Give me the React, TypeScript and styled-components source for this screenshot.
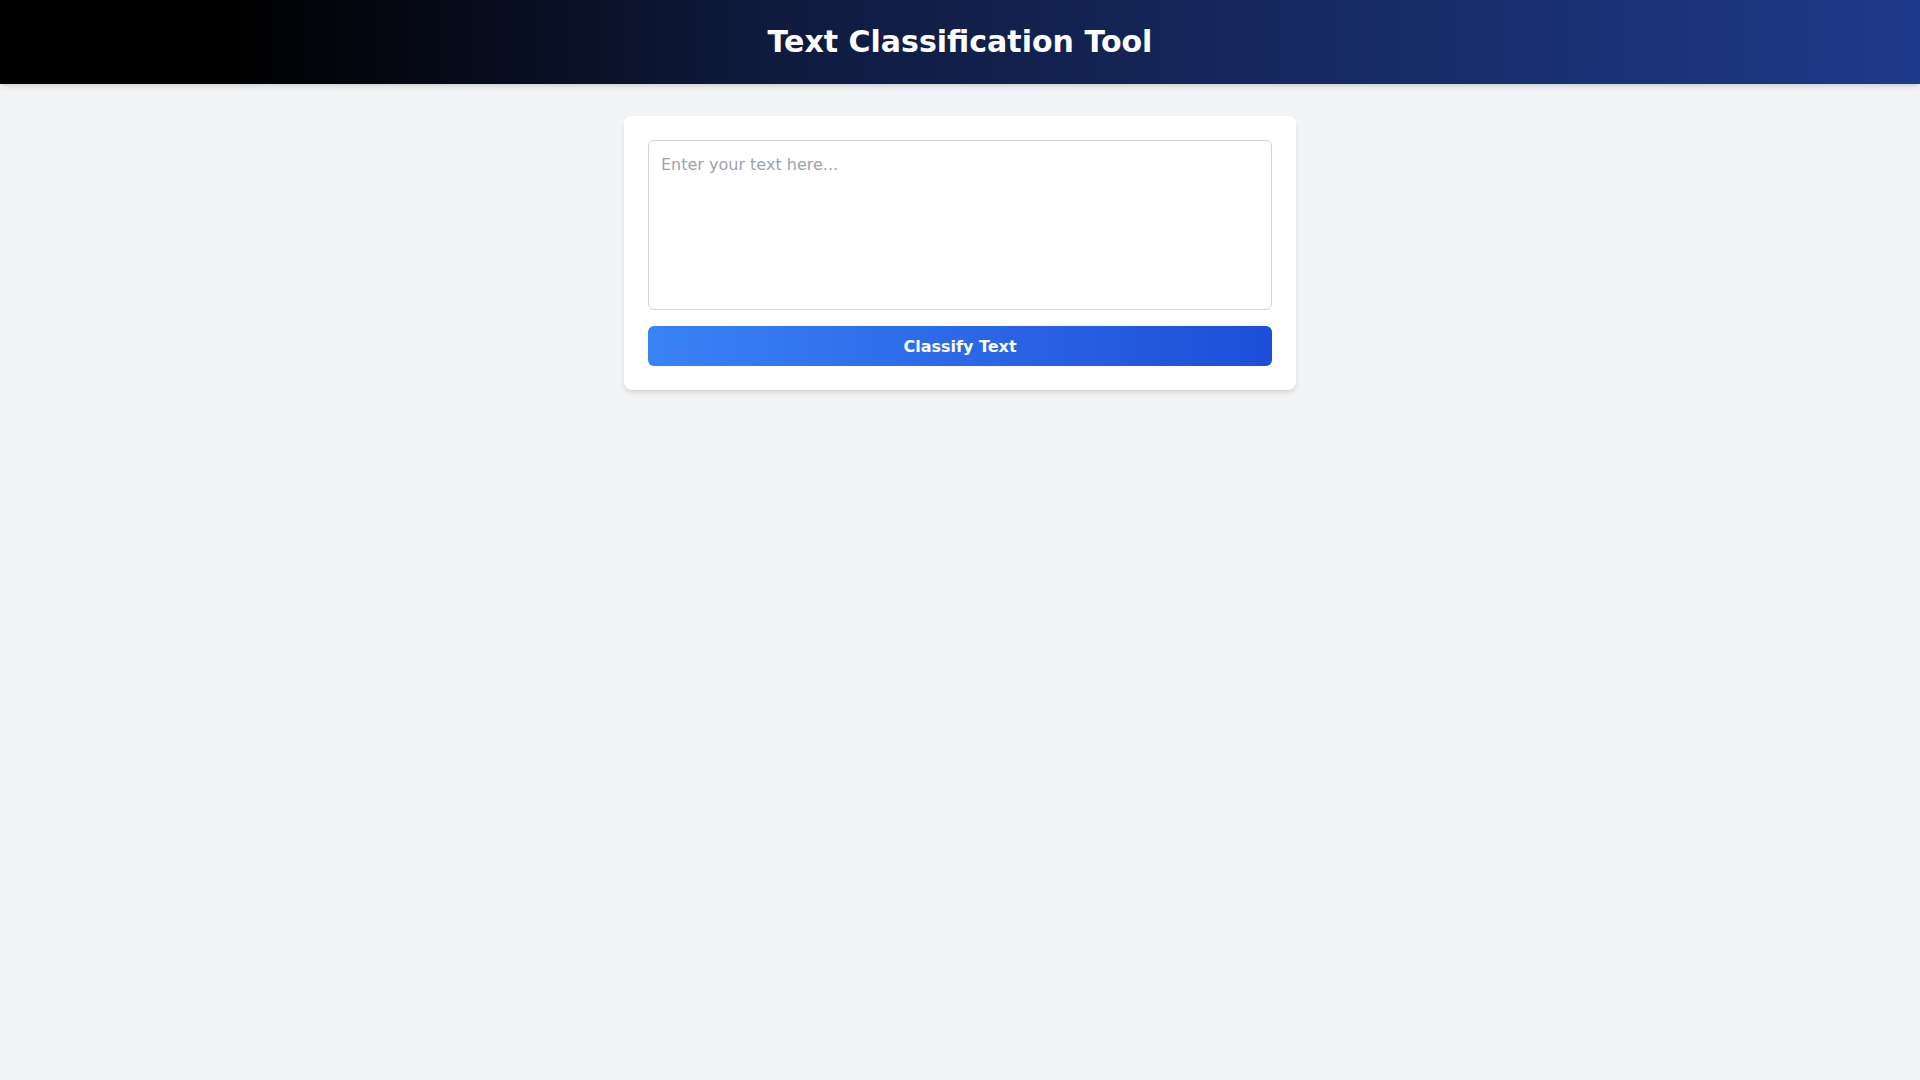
import styled, { createGlobalStyle } from "styled-components";

const GlobalStyle = createGlobalStyle`
  * {
    box-sizing: border-box;
  }

  body {
    margin: 0;
    background: #f3f4f6;
    font-family: "DejaVu Sans", "Liberation Sans", sans-serif;
  }
`;

const Page = styled.div`
  min-height: 100vh;
  background: #f3f4f6;
`;

const Header = styled.header`
  height: 84px;
  display: flex;
  align-items: center;
  justify-content: center;
  background: linear-gradient(to right, #000000 12%, #0f1a3d 40%, #1e3a8a 100%);
  box-shadow: 0 4px 6px -1px rgba(0, 0, 0, 0.1), 0 2px 4px -2px rgba(0, 0, 0, 0.1);
`;

const Title = styled.h1`
  margin: 0;
  color: #fff;
  font-size: 30px;
  font-weight: 700;
  line-height: 36px;
`;

const Main = styled.main`
  display: flex;
  justify-content: center;
  padding: 32px 16px;
`;

const Card = styled.div`
  width: 672px;
  display: flex;
  flex-direction: column;
  gap: 16px;
  padding: 24px;
  background: #fff;
  border-radius: 8px;
  box-shadow: 0 4px 6px -1px rgba(0, 0, 0, 0.1), 0 2px 4px -2px rgba(0, 0, 0, 0.1);
`;

const TextInput = styled.textarea`
  width: 100%;
  height: 170px;
  padding: 12px;
  border: 1px solid #d1d5db;
  border-radius: 6px;
  resize: none;
  font-family: "DejaVu Sans", sans-serif;
  font-size: 16px;
  line-height: 24px;
  color: #111827;
  outline: none;

  &::placeholder {
    color: #9ca3af;
  }
`;

const ClassifyButton = styled.button`
  height: 40px;
  border: none;
  border-radius: 6px;
  background: linear-gradient(to right, #3b82f6, #1d4ed8);
  color: #fff;
  font-family: "DejaVu Sans", sans-serif;
  font-size: 16px;
  font-weight: 700;
  cursor: pointer;
`;

const App = () => {
  return (
    <Page>
      <GlobalStyle />
      <Header>
        <Title>Text Classification Tool</Title>
      </Header>
      <Main>
        <Card>
          <TextInput placeholder="Enter your text here..." />
          <ClassifyButton>Classify Text</ClassifyButton>
        </Card>
      </Main>
    </Page>
  );
};

export default App;
